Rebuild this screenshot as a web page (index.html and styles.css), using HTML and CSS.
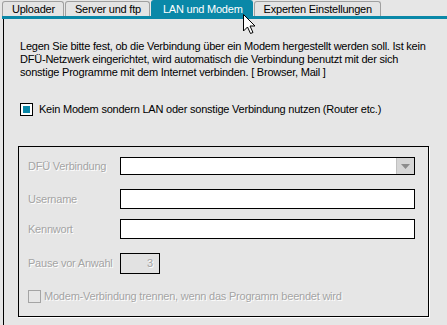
FILE: index.html
```html
<!DOCTYPE html>
<html lang="de">
<head>
  <meta charset="UTF-8">
  <title>LAN und Modem</title>
  <link rel="stylesheet" href="styles.css">
</head>
<body>
  <div class="window">
    <div class="tabs">
      <div class="tab">Uploader</div>
      <div class="tab">Server und ftp</div>
      <div class="tab active">LAN und Modem</div>
      <div class="tab">Experten Einstellungen</div>
    </div>
    <div class="tab-line"></div>

    <div class="panel">
      <p class="intro">Legen Sie bitte fest, ob die Verbindung über ein Modem hergestellt werden soll. Ist kein DFÜ-Netzwerk eingerichtet, wird automatisch die Verbindung benutzt mit der sich sonstige Programme mit dem Internet verbinden. [ Browser, Mail ]</p>

      <label class="check">
        <span class="box checked"></span>
        <span>Kein Modem sondern LAN oder sonstige Verbindung nutzen (Router etc.)</span>
      </label>

      <div class="group">
        <div class="row row-1">
          <span class="lbl">DFÜ Verbindung</span>
          <div class="field select"><span class="drop"><svg width="9" height="5" viewBox="0 0 9 5"><polygon points="0,0 9,0 4.5,5" fill="#8c8c8c"/></svg></span></div>
        </div>
        <div class="row row-2">
          <span class="lbl">Username</span>
          <div class="field"></div>
        </div>
        <div class="row row-3">
          <span class="lbl">Kennwort</span>
          <div class="field"></div>
        </div>
        <div class="row row-4">
          <span class="lbl">Pause vor Anwahl</span>
          <div class="field small">3</div>
        </div>
        <label class="check disabled">
          <span class="box"></span>
          <span>Modem-Verbindung trennen, wenn das Programm beendet wird</span>
        </label>
      </div>
    </div>

    <svg class="cursor" width="13" height="21" viewBox="0 0 13 21">
      <polygon points="0.5,0.5 0.5,17 4.5,13 7.5,19.5 10,18.5 7,12 12,12" fill="#fff" stroke="#000" stroke-width="1"/>
    </svg>
  </div>
</body>
</html>
```

FILE: styles.css
```css
body {
  margin: 0;
  background-color: #e6e6e6;
  font-family: "Liberation Sans", Arial, sans-serif;
  font-size: 11px;
  letter-spacing: -0.22px;
  color: #000;
}

.window {
  position: relative;
  width: 447px;
  height: 325px;
  overflow: hidden;
}

/* tab strip */
.tabs {
  display: flex;
  align-items: flex-end;
  height: 16px;
  padding-left: 2px;
}

.tab {
  height: 15px;
  line-height: 15px;
  padding: 0 8px 0 9px;
  font-size: 11px;
  background-color: #e4e4e4;
  border: 1px solid #a0a0a0;
  border-bottom: none;
  border-radius: 3px 3px 0 0;
  box-sizing: border-box;
  margin-right: 1px;
}

.tab.active {
  height: 16px;
  line-height: 16px;
  padding: 0 9px 0 11px;
  color: #fff;
  background-color: #0a88a8;
  border-color: #0a88a8;
}

.tab-line {
  height: 3px;
  margin-left: 2px;
  background-color: #0a88a8;
}

/* page body */
.panel {
  margin-left: 3px;
  width: 439px;
  height: 320px;
  border-left: 1px solid #000;
  border-right: 1px solid #000;
  padding: 21px 0 0 16px;
}

.intro {
  margin: 0;
  width: 415px;
  line-height: 13px;
}

.check {
  display: flex;
  align-items: center;
  gap: 6px;
  margin-top: 23px;
  height: 14px;
}

.box {
  width: 13px;
  height: 13px;
  box-sizing: border-box;
  border: 1px solid #000;
  background-color: #fff;
  display: flex;
  align-items: center;
  justify-content: center;
}

.box.checked::after {
  content: "";
  width: 7px;
  height: 7px;
  background-color: #0a88a8;
}

/* group box */
.group {
  margin: 30px 0 0 -2px;
  width: 411px;
  box-sizing: border-box;
  border: 1px solid #000;
  box-shadow: 1px 1px 0 #fff;
  padding: 10px 13px 13px 9px;
}

.row {
  display: flex;
  align-items: flex-start;
}

.row-1 { height: 32px; }
.row-2 { height: 30px; }
.row-3 { height: 34px; }
.row-4 { height: 36px; }

.lbl {
  width: 92px;
  line-height: 18px;
  color: #a4a4a4;
  text-shadow: 1px 1px 0 #fff;
}

.row-2 .lbl,
.row-3 .lbl { line-height: 20px; }
.row-4 .lbl { line-height: 21px; }

.field {
  flex: 1;
  height: 20px;
  box-sizing: border-box;
  border: 1px solid #000;
  background-color: #fff;
}

.field.select {
  height: 18px;
  display: flex;
  justify-content: flex-end;
}

.drop {
  width: 17px;
  height: 16px;
  background-color: #d6d6d6;
  border-left: 1px solid #c0c0c0;
  display: flex;
  align-items: center;
  justify-content: center;
}

.field.small {
  flex: none;
  width: 40px;
  height: 21px;
  line-height: 19px;
  text-align: right;
  padding-right: 6px;
  background-color: #e2e2e2;
  color: #a4a4a4;
  text-shadow: 1px 1px 0 #fff;
}

.check.disabled {
  margin: 0;
  gap: 3px;
  color: #a4a4a4;
  text-shadow: 1px 1px 0 #fff;
}

.check.disabled .box {
  border-color: #a4a4a4;
  background-color: transparent;
}

.cursor {
  position: absolute;
  left: 243px;
  top: 14px;
}
```
